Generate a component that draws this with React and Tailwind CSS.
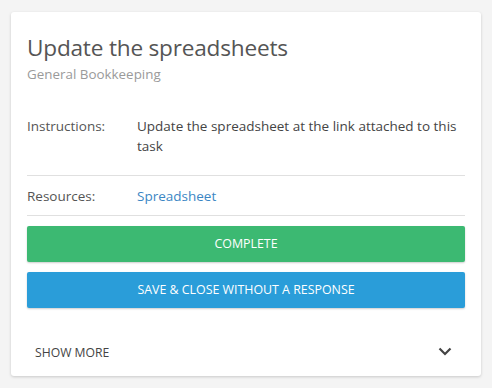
import React from 'react';

const rows = [
    { label: 'Instructions:', value: 'Update the spreadsheet at the link attached to this task' },
    { label: 'Resources:', value: 'Spreadsheet', link: true },
];

const App = () => {
    return (
        <div className="min-h-screen bg-[#f4f4f4] pt-[12px] pl-[11px] pr-[11px]" style={{ fontFamily: '"Open Sans", "Noto Sans", sans-serif' }}>
            <div className="w-[470px] h-[364px] bg-white rounded-[3px] shadow-[0_1px_3px_rgba(0,0,0,0.18)] px-4 pt-[22px]">
                <h1 className="text-[22.6px] leading-[28px] text-[#555] tracking-[-0.2px]">Update the spreadsheets</h1>
                <p className="mt-[4px] text-[13.4px] leading-[16px] text-[#9a9a9a]">General Bookkeeping</p>

                <div className="mt-[34px]">
                    {rows.map((row, i) => (
                        <div
                            key={row.label}
                            className={`flex text-[13.5px] leading-[20px] border-b border-[#e0e0e0] ${i === 0 ? 'pb-[19px]' : 'pt-[10px] pb-[9px]'}`}
                        >
                            <div className="w-[110px] shrink-0 text-[#555]">{row.label}</div>
                            <div className={`flex-1 ${row.link ? 'text-[#3b86c4]' : 'text-[#444]'}`}>{row.value}</div>
                        </div>
                    ))}
                </div>

                <button className="mt-[10px] w-full h-[36px] rounded-[2px] bg-[#3cb972] text-white text-[12.4px] uppercase shadow-[0_1px_2px_rgba(0,0,0,0.2)]">
                    Complete
                </button>
                <button className="mt-[10px] w-full h-[36px] rounded-[2px] bg-[#2a9dd9] text-white text-[12.4px] uppercase shadow-[0_1px_2px_rgba(0,0,0,0.2)]">
                    Save &amp; Close without a response
                </button>

                <div className="mt-[36px] flex items-center justify-between pl-2 pr-[13px]">
                    <span className="text-[12.2px] text-[#444] uppercase">Show more</span>
                    <svg width="14" height="9" viewBox="0 0 14 9" fill="none" className="-mt-[3px]">
                        <path d="M1.5 1.5 L7 7 L12.5 1.5" stroke="#444" strokeWidth="2.2" />
                    </svg>
                </div>
            </div>
        </div>
    );
};

export default App;
